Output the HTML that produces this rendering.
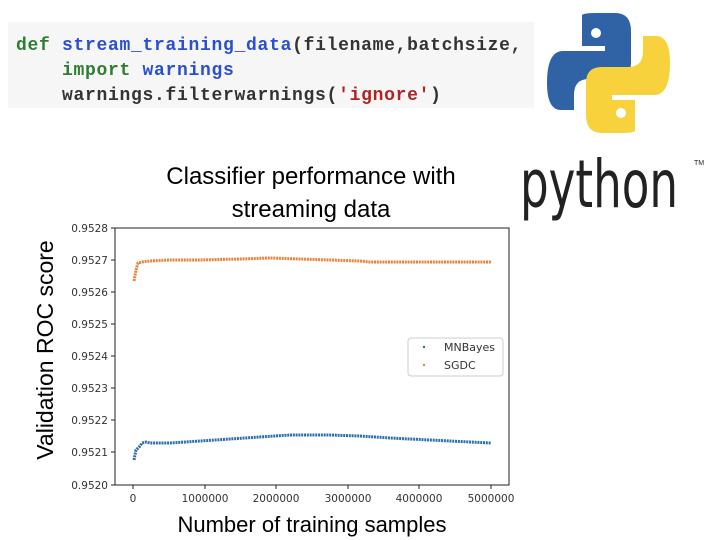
<!DOCTYPE html>
<html><head><style>
body{margin:0;width:720px;height:540px;background:#fff;overflow:hidden;position:relative;font-family:"Liberation Sans",sans-serif}
.code{position:absolute;left:8px;top:22px;width:526px;height:86px;background:#f6f6f6}
.code pre{margin:0;position:absolute;left:8px;top:12px;font-family:"Liberation Mono",monospace;font-weight:bold;font-size:18px;letter-spacing:0.7px;line-height:25px;color:#333}
.k{color:#2e7d32}.f{color:#2a4fd0}.s{color:#b22222}
</style></head><body>
<div class="code"><pre><span class="k">def</span> <span class="f">stream_training_data</span>(filename,batchsize,
    <span class="k">import</span> <span class="f">warnings</span>
    warnings.filterwarnings(<span class="s">'ignore'</span>)</pre></div>
<svg width="720" height="540" style="position:absolute;left:0;top:0">
<g transform="translate(547,13)">
<path d="M35 2 Q37 0 50 0 H68 Q84 0 84 18 V50 Q84 66 68 66 H42 Q27 66 27 82 V97 H14 Q0 97 0 70 Q0 38 16 38 H58 V33 H35 Z" fill="#2f63a6"/>
<circle cx="49" cy="20" r="5" fill="#fff"/>
<g transform="rotate(180 61.5 60)">
<path d="M35 2 Q37 0 50 0 H68 Q84 0 84 18 V50 Q84 66 68 66 H42 Q27 66 27 82 V97 H14 Q0 97 0 70 Q0 38 16 38 H58 V33 H35 Z" fill="#f7d23c"/>
<circle cx="49" cy="20" r="5" fill="#fff"/>
</g></g>
<text x="520" y="207" font-size="66" fill="#222" font-family="DejaVu Sans" textLength="158" lengthAdjust="spacingAndGlyphs">python</text>
<text x="694" y="165" font-size="7" fill="#222">TM</text>
<text x="311" y="184" font-size="24" text-anchor="middle" fill="#000">Classifier performance with</text>
<text x="311" y="217" font-size="24" text-anchor="middle" fill="#000">streaming data</text>
<rect x="115" y="228" width="394" height="257" fill="none" stroke="#222" stroke-width="1"/>
<g font-size="10.5" fill="#333" text-anchor="end" font-family="DejaVu Sans">
<text x="108" y="232">0.9528</text><text x="108" y="264">0.9527</text><text x="108" y="296">0.9526</text><text x="108" y="328">0.9525</text><text x="108" y="360">0.9524</text><text x="108" y="392">0.9523</text><text x="108" y="424">0.9522</text><text x="108" y="456">0.9521</text><text x="108" y="489">0.9520</text>
</g>
<g stroke="#222"><line x1="111" y1="228" x2="115" y2="228"/><line x1="111" y1="260" x2="115" y2="260"/><line x1="111" y1="292" x2="115" y2="292"/><line x1="111" y1="324" x2="115" y2="324"/><line x1="111" y1="356" x2="115" y2="356"/><line x1="111" y1="388" x2="115" y2="388"/><line x1="111" y1="420" x2="115" y2="420"/><line x1="111" y1="452" x2="115" y2="452"/><line x1="111" y1="485" x2="115" y2="485"/>
<line x1="133" y1="485" x2="133" y2="489"/><line x1="205" y1="485" x2="205" y2="489"/><line x1="276" y1="485" x2="276" y2="489"/><line x1="348" y1="485" x2="348" y2="489"/><line x1="419" y1="485" x2="419" y2="489"/><line x1="491" y1="485" x2="491" y2="489"/></g>
<g font-size="10.5" fill="#333" text-anchor="middle" font-family="DejaVu Sans">
<text x="133" y="502">0</text><text x="205" y="502">1000000</text><text x="276" y="502">2000000</text><text x="348" y="502">3000000</text><text x="419" y="502">4000000</text><text x="491" y="502">5000000</text></g>
<path d="M134 281 L136 270 L138 263 L142 262 L150 261 L170 260 L200 260 L240 259 L270 258 L300 259 L330 260 L360 261 L370 262 L491 262" fill="none" stroke="#e8823a" stroke-width="3" stroke-dasharray="2 0.8"/>
<path d="M134 460 L136 450 L140 446 L142 443 L146 442 L150 443 L170 443 L200 441 L230 439 L260 437 L290 435 L330 435 L360 436 L390 438 L430 440 L470 442 L491 443" fill="none" stroke="#2c6fad" stroke-width="3" stroke-dasharray="2 0.8"/>
<rect x="408" y="338" width="95" height="38" rx="3" fill="#fff" stroke="#ccc"/>
<circle cx="424" cy="347" r="1.2" fill="#2c6fad"/><circle cx="424" cy="365" r="1.2" fill="#e8823a"/>
<text x="444" y="351" font-size="11" fill="#333" font-family="DejaVu Sans">MNBayes</text>
<text x="444" y="369" font-size="11" fill="#333" font-family="DejaVu Sans">SGDC</text>
<text x="312" y="532" font-size="22" text-anchor="middle" fill="#000">Number of training samples</text>
<text transform="translate(53,350) rotate(-90)" font-size="23" text-anchor="middle" fill="#000">Validation ROC score</text>
</svg>
</body></html>
